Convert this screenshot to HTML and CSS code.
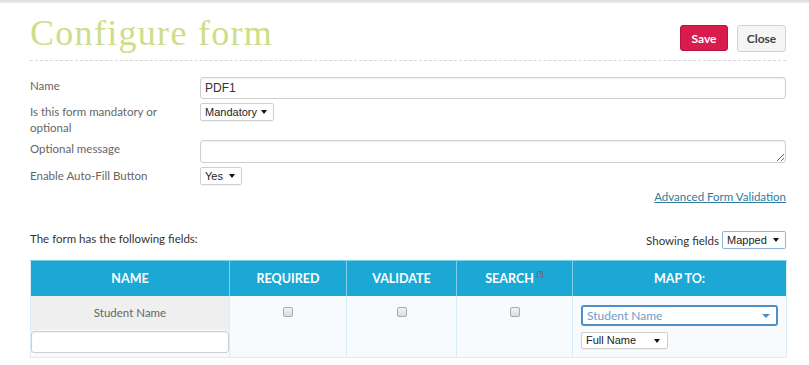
FILE: index.html
```html
<!DOCTYPE html>
<html lang="en">
<head>
<meta charset="utf-8">
<title>Configure form</title>
<link rel="stylesheet" href="styles.css">
</head>
<body>
<div class="topbar"></div>
<div class="page">
  <header class="head">
    <h1 class="title">Configure form</h1>
    <div class="actions">
      <button class="btn btn-save" type="button">Save</button>
      <button class="btn btn-close" type="button">Close</button>
    </div>
  </header>

  <form class="form">
    <div class="row">
      <label class="lbl">Name</label>
      <input class="text" type="text" value="PDF1">
    </div>
    <div class="row">
      <label class="lbl">Is this form mandatory or optional</label>
      <span class="sel sel-mand"><select><option>Mandatory</option><option>Optional</option></select></span>
    </div>
    <div class="row">
      <label class="lbl">Optional message</label>
      <textarea class="area"></textarea>
    </div>
    <div class="row">
      <label class="lbl">Enable Auto-Fill Button</label>
      <span class="sel sel-yes"><select><option>Yes</option><option>No</option></select></span>
    </div>
  </form>

  <div class="adv"><a href="#">Advanced Form Validation</a></div>

  <div class="fields-bar">
    <span class="fields-note">The form has the following fields:</span>
    <span class="showing">Showing fields <span class="sel sel-mapped"><select><option>Mapped</option><option>All</option></select></span></span>
  </div>

  <table class="fields">
    <colgroup>
      <col class="c-name"><col class="c-req"><col class="c-val"><col class="c-search"><col class="c-map">
    </colgroup>
    <thead>
      <tr>
        <th>NAME</th>
        <th>REQUIRED</th>
        <th>VALIDATE</th>
        <th>SEARCH <sup class="help">(?)</sup></th>
        <th>MAP TO:</th>
      </tr>
    </thead>
    <tbody>
      <tr>
        <td class="name-cell">
          <div class="name-label">Student Name</div>
          <input class="text name-input" type="text">
        </td>
        <td class="chk-cell"><input class="chk" type="checkbox"></td>
        <td class="chk-cell"><input class="chk" type="checkbox"></td>
        <td class="chk-cell"><input class="chk" type="checkbox"></td>
        <td class="map-cell">
          <div class="map-select">Student Name<span class="map-caret"></span></div>
          <span class="sel sel-full"><select><option>Full Name</option><option>First Name</option></select></span>
        </td>
      </tr>
    </tbody>
  </table>
</div>
</body>
</html>
```

FILE: styles.css
```css
* { box-sizing: border-box; }

html, body {
  margin: 0;
  padding: 0;
  background: #ffffff;
}

body {
  font-family: Lato, "Open Sans", sans-serif;
  font-size: 11.5px;
  color: #666;
}

.topbar {
  height: 3px;
  background: linear-gradient(#dcdcdc, #ececec);
}

.page {
  padding: 0 23px 0 30px;
}

/* header */
.head {
  display: flex;
  justify-content: space-between;
  align-items: flex-start;
  padding: 10px 0 7px;
  border-bottom: 1px dashed #d6d6d6;
}

.title {
  margin: 0;
  font-family: "Liberation Serif", "DejaVu Serif", serif;
  font-weight: normal;
  font-size: 36px;
  line-height: 40px;
  letter-spacing: 1.3px;
  color: #cddd88;
}

.actions {
  display: flex;
  gap: 9px;
  margin-top: 12px;
}

.btn {
  font-family: Lato, sans-serif;
  font-weight: bold;
  font-size: 12px;
  border-radius: 3px;
  padding: 0;
  cursor: pointer;
}

.btn-save {
  width: 48px;
  height: 26px;
  background: #d81c4e;
  border: 1px solid #b8143f;
  color: #fff;
}

.btn-close {
  width: 49px;
  height: 27px;
  background: #f5f5f5;
  border: 1px solid #d2d2d2;
  color: #444;
}

/* form */
.form {
  padding-top: 16px;
  display: flex;
  flex-direction: column;
  gap: 4px;
}

.row {
  display: grid;
  grid-template-columns: 170px 1fr;
  align-items: start;
}

.lbl {
  padding-top: 1px;
  line-height: 16px;
  color: #666;
  width: 140px;
}

.text {
  height: 22px;
  width: 100%;
  border: 1px solid #cfcfcf;
  border-radius: 3px;
  box-shadow: inset 0 1px 2px rgba(0,0,0,0.06);
  font-family: "Liberation Sans", Arial, sans-serif;
  font-size: 12px;
  color: #333;
  padding: 0 4px;
  outline: none;
}

.area {
  height: 23px;
  width: 100%;
  border: 1px solid #cfcfcf;
  border-radius: 3px;
  box-shadow: inset 0 1px 2px rgba(0,0,0,0.06);
  resize: vertical;
  display: block;
  margin: 0;
  font-family: "Liberation Sans", Arial, sans-serif;
}

/* selects */
.sel {
  position: relative;
  display: inline-block;
  height: 18px;
}

.sel select {
  -webkit-appearance: none;
  appearance: none;
  height: 18px;
  width: 100%;
  border: 1px solid #cfcfcf;
  border-radius: 2px;
  background: #fff;
  font-family: "Liberation Sans", Arial, sans-serif;
  font-size: 11px;
  color: #222;
  padding: 0 0 0 4px;
  box-shadow: 0 1px 1px rgba(0,0,0,0.04);
  outline: none;
}

.sel::after {
  content: "";
  position: absolute;
  right: 7px;
  top: 7px;
  border-left: 3px solid transparent;
  border-right: 3px solid transparent;
  border-top: 4px solid #111;
  pointer-events: none;
}

.row .sel { justify-self: start; }
.sel-mand { width: 74px; }
.sel-yes { width: 42px; }
.sel-mapped { width: 64px; }
.sel-mapped select { border-color: #8fb5dc; }
.sel-full { width: 87px; height: 17px; }
.sel-full select { height: 17px; }
.sel-full::after { top: 7px; right: 8px; }

/* link */
.adv {
  margin-top: 4px;
  text-align: right;
  line-height: 16px;
}

.adv a {
  color: #2d7c9e;
  text-decoration: underline;
}

/* fields bar */
.fields-bar {
  margin-top: 26px;
  display: flex;
  justify-content: space-between;
  align-items: center;
  color: #333;
}

.fields-note { margin-top: -4px; }

.showing {
  display: flex;
  align-items: center;
  gap: 3px;
  color: #333;
}

/* table */
.fields {
  margin-top: 11px;
  width: 100%;
  border-collapse: collapse;
  table-layout: fixed;
  border: 1px solid #d7eef8;
}

.c-name { width: 199px; }
.c-req { width: 117px; }
.c-val { width: 110px; }
.c-search { width: 116px; }
.c-map { width: 214px; }

.fields th {
  height: 35px;
  background: #1ba8d5;
  color: #fff;
  font-weight: bold;
  font-size: 12.5px;
  text-align: center;
  border-left: 1px solid #7fcbe8;
  border-top: 1px solid #7fcbe8;
  padding: 0;
}

.fields th:first-child { border-left-color: #d7eef8; }

.help {
  color: #d11a3f;
  font-size: 7px;
  font-weight: normal;
  vertical-align: 6px;
}

.fields td {
  background: #f7fbfd;
  border-left: 1px solid #d7eef8;
  vertical-align: top;
  padding: 0;
  height: 62px;
}

.name-cell { padding: 0 0 4px 0; }

.name-label {
  height: 34px;
  background: #efefef;
  color: #666;
  font-size: 11.5px;
  text-align: center;
  line-height: 34px;
}

.name-input {
  display: block;
  margin-top: 1px;
  width: 198px;
  margin-left: 0;
  background: #fff;
}

.chk-cell {
  text-align: center;
  padding-top: 10px !important;
}

.chk {
  -webkit-appearance: none;
  appearance: none;
  width: 10px;
  height: 10px;
  margin: 0;
  border: 1px solid #a9a9a9;
  border-radius: 2px;
  background: linear-gradient(#f2f2f2, #dcdcdc);
}

.map-cell {
  padding: 9px 8px 0 8px !important;
}

.map-select {
  position: relative;
  height: 21px;
  border: 2px solid #4e8fc7;
  border-radius: 3px;
  background: #fff;
  color: #6e9bc9;
  font-size: 12px;
  line-height: 17px;
  padding-left: 4px;
  margin-bottom: 6px;
}

.map-caret {
  position: absolute;
  right: 6px;
  top: 7px;
  border-left: 4px solid transparent;
  border-right: 4px solid transparent;
  border-top: 4px solid #4e8fc7;
}
```
